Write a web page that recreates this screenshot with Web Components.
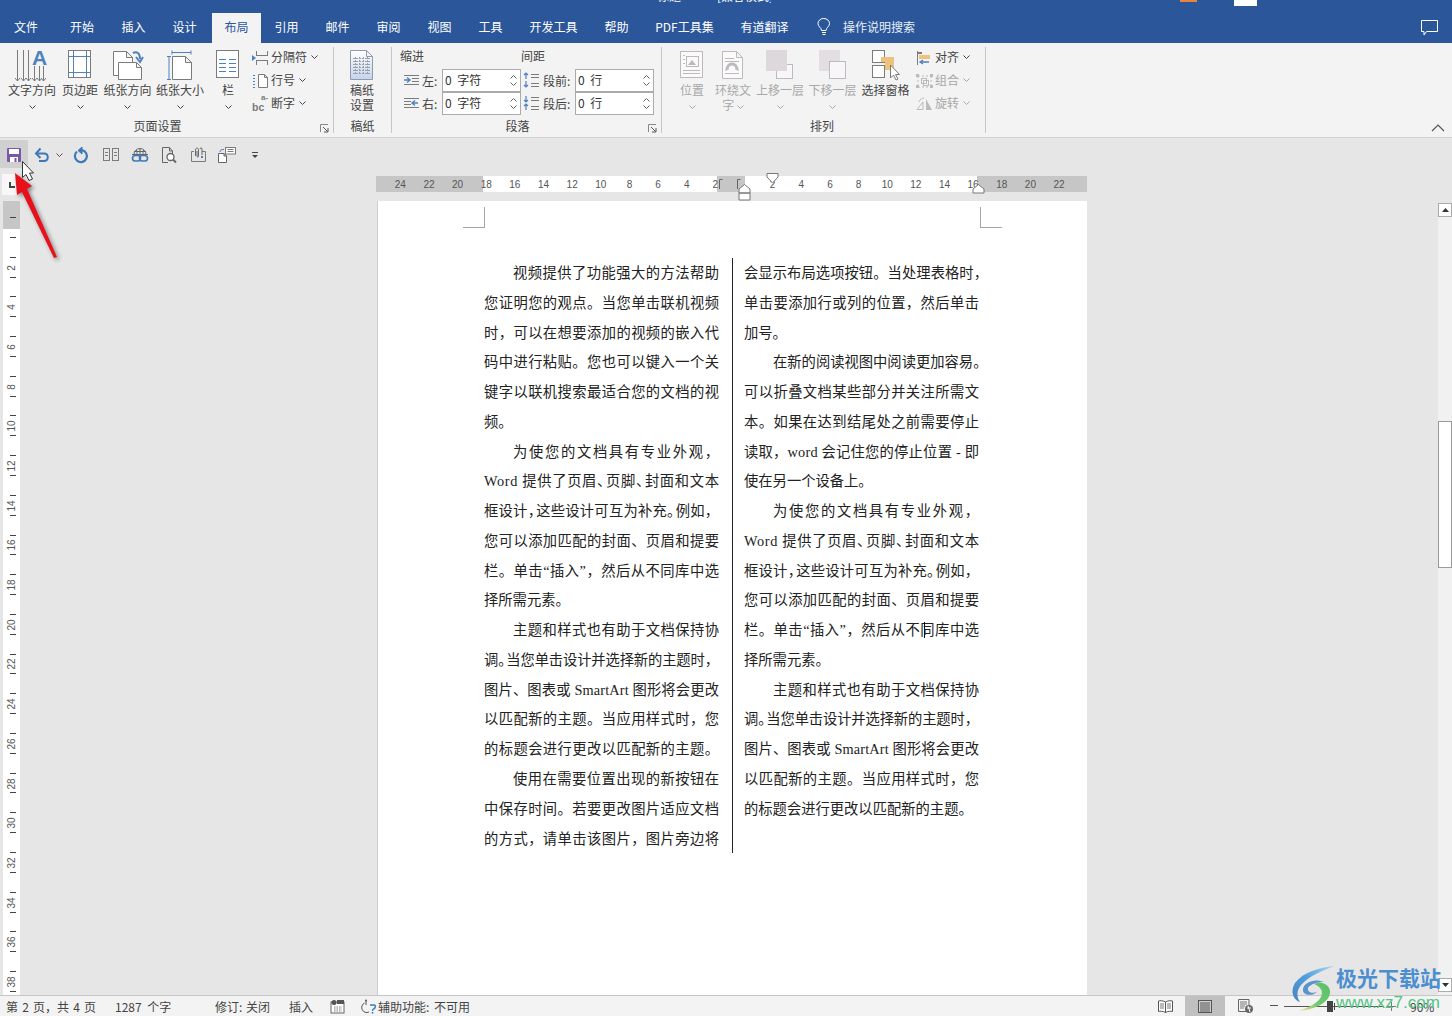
<!DOCTYPE html>
<html lang="zh-CN">
<head>
<meta charset="utf-8">
<title>Word</title>
<style>
  html, body { margin: 0; height: 100%; overflow: hidden; }
  body { font-family: "Noto Sans CJK SC", "Liberation Sans", sans-serif; font-size: 12px; color: #444; }
</style>
</head>
<body>
<word-app>
  <title-tabs></title-tabs>
  <ribbon-bar>
    <ribbon-group label="页面设置" width="334" pad="6" label-pad="18" launcher>
      <big-button icon="textdir" label="文字方向" width="52"></big-button>
      <big-button icon="margins" label="页边距" width="44"></big-button>
      <big-button icon="orient" label="纸张方向" width="51"></big-button>
      <big-button icon="size" label="纸张大小" width="54"></big-button>
      <big-button icon="cols" label="栏" width="42"></big-button>
      <small-stack>
        <small-button icon="breaks" label="分隔符" menu></small-button>
        <small-button icon="linenum" label="行号" menu></small-button>
        <small-button icon="hyph" label="断字" menu></small-button>
      </small-stack>
    </ribbon-group>
    <ribbon-group label="稿纸" width="58" pad="0" label-pad="0">
      <big-button icon="gridpage" label="稿纸" line2="设置" width="56" nomenu></big-button>
    </ribbon-group>
    <ribbon-group label="段落" width="270" pad="8" label-pad="18" launcher>
      <para-panel></para-panel>
    </ribbon-group>
    <ribbon-group label="排列" width="324" pad="10" label-pad="3">
      <big-button icon="position" label="位置" width="40" disabled></big-button>
      <big-button icon="wrap" label="环绕文" line2="字" width="42" disabled inline-menu></big-button>
      <big-button icon="forward" label="上移一层" width="52" disabled></big-button>
      <big-button icon="backward" label="下移一层" width="53" disabled></big-button>
      <big-button icon="pane" label="选择窗格" width="53" nomenu></big-button>
      <small-stack style="margin-left:4px">
        <small-button icon="align" label="对齐" menu></small-button>
        <small-button icon="group" label="组合" menu disabled></small-button>
        <small-button icon="rotate" label="旋转" menu disabled></small-button>
      </small-stack>
    </ribbon-group>
  </ribbon-bar>
  <quick-bar></quick-bar>
  <doc-workspace>
    <vertical-ruler slot="left"></vertical-ruler>
    <horizontal-ruler></horizontal-ruler>
    <doc-page></doc-page>
    <doc-scrollbar slot="right"></doc-scrollbar>
  </doc-workspace>
  <status-bar></status-bar>
  <click-marker></click-marker>
  <site-watermark></site-watermark>
</word-app>

<script>
const GR = '#7b7b7b';
const BL = '#4f81bd';
const DIS = '#bdb9bd';

function page(x, y, w, h, f) {
    return `M${x} ${y}H${x + w - f}L${x + w} ${y + f}V${y + h}H${x}ZM${x + w - f} ${y}V${y + f}H${x + w}`;
}

function downArrow(x, y1, y2) {
    return `<path d="M${x} ${y1}V${y2}" stroke="${GR}"/><path d="M${x - 2.5} ${y2 - 3}L${x} ${y2}L${x + 2.5} ${y2 - 3}" stroke="${GR}" fill="none"/>`;
}

function svg(w, h, body) {
    return `<svg width="${w}" height="${h}" viewBox="0 0 ${w} ${h}" fill="none" style="display:block;overflow:visible">${body}</svg>`;
}

const ICONS = {
    textdir: svg(36, 34, `
        ${downArrow(3.5, 2, 33)}${downArrow(9.5, 2, 33)}${downArrow(14.5, 2, 33)}
        ${downArrow(20.5, 18, 33)}${downArrow(25.5, 18, 33)}${downArrow(29.5, 18, 33)}
        <text x="18" y="17" font-family="Liberation Sans" font-weight="bold" font-size="21" fill="${BL}">A</text>`),
    margins: svg(24, 30, `
        <rect x=".5" y=".5" width="22" height="27" fill="#fff" stroke="${GR}"/>
        <path d="M5.5 1V27M18.5 1V27M1 6.5H22M1 22.5H22" stroke="${BL}"/>`),
    orient: svg(32, 32, `
        <path d="${page(1.5, 2.5, 19, 24, 6)}" fill="#fff" stroke="${GR}"/>
        <path d="${page(6.5, 13.5, 23, 17, 5)}" fill="#fff" stroke="${GR}"/>
        <path d="M21 4C25 2 28 4 28 10" stroke="${BL}" stroke-width="2"/>
        <path d="M24 8L28 13L31 8" stroke="${BL}" stroke-width="2"/>`),
    size: svg(28, 32, `
        <path d="M6 3.5H25M6 1.5V5.5M25 1.5V5.5M1 7.5H5M3 7.5V30.5M1 30.5H5" stroke="${BL}"/>
        <path d="${page(6.5, 7.5, 19, 23, 6)}" fill="#fff" stroke="${GR}"/>`),
    cols: svg(24, 30, `
        <rect x=".5" y=".5" width="22" height="27" fill="#fff" stroke="${GR}"/>
        <path d="M3 9.5H10M13 9.5H20M3 13.5H10M13 13.5H20M3 17.5H10M13 17.5H20M3 21.5H10M13 21.5H20" stroke="${BL}"/>`),
    gridpage: svg(26, 32, `
        <defs><linearGradient id="g" x1="0" y1="0" x2="0" y2="1"><stop offset="0" stop-color="#fff"/><stop offset="1" stop-color="#c5d3ea"/></linearGradient></defs>
        <path d="${page(1.5, 1.5, 22, 29, 6)}" fill="url(#g)" stroke="#8e9bb0"/>
        <path d="M4 9.5H21M4 12.5H21M4 15.5H21M4 18.5H21M4 21.5H21M4 24.5H21M6.5 8V26M10.5 8V26M14.5 8V26M18.5 8V26" stroke="#9a9fa8" stroke-dasharray="2 1"/>`),
    breaks: svg(16, 16, `
        <path d="M4.5 6V1M15.5 6V1M4.5 5.5H15.5M4.5 15V10M15.5 15V10M4.5 10.5H15.5" stroke="${GR}"/>
        <path d="M0 5L4 8L0 11Z" fill="${BL}"/>`),
    linenum: svg(16, 16, `
        <path d="${page(6.5, 1.5, 9, 13, 3)}" fill="#fff" stroke="${GR}"/>
        <path d="M1 2.5H4M1 5.5H4M1 8.5H4M1 11.5H4M1 14.5H4" stroke="${BL}" stroke-dasharray="2 1"/>`),
    hyph: svg(17, 16, `
        <text x="0" y="15" font-family="Liberation Sans" font-weight="bold" font-size="10.5" fill="${GR}">bc</text>
        <text x="9" y="4" font-family="Liberation Sans" font-weight="bold" font-size="8" fill="${GR}">a-</text>`),
    position: svg(26, 30, `
        <rect x="1.5" y="1.5" width="22" height="26" fill="#fbfafb" stroke="${DIS}"/>
        <rect x="7.5" y="6.5" width="12" height="10" stroke="${DIS}"/>
        <path d="M9 15L13 10L17 15Z" fill="${DIS}"/>
        <path d="M4 5.5H6M4 9.5H6M4 13.5H6M4 20.5H21M4 23.5H21" stroke="${DIS}"/>`),
    wrap: svg(24, 30, `
        <path d="${page(1.5, 1.5, 20, 27, 6)}" fill="#fbfafb" stroke="${DIS}"/>
        <path d="M4 8.5H13M4 11.5H18M4 23.5H18M4 20H6M16 20H18" stroke="${DIS}"/>
        <path d="M6 20C6 12 16 12 16 20" stroke="${DIS}" stroke-width="3"/>`),
    forward: svg(28, 30, `
        <rect x="10.5" y="14.5" width="16" height="14" fill="#f8f6f8" stroke="${DIS}"/>
        <rect x="0" y="0" width="21" height="21" fill="#dcd8dc"/>`),
    backward: svg(28, 30, `
        <rect x="0" y="0" width="21" height="21" fill="#e2dee2"/>
        <rect x="10.5" y="11.5" width="16" height="17" fill="#f8f6f8" stroke="${DIS}"/>`),
    pane: svg(30, 32, `
        <rect x="1.5" y="1.5" width="12" height="12" fill="#fff" stroke="${GR}"/>
        <rect x="1.5" y="16.5" width="12" height="12" fill="#fff" stroke="${GR}"/>
        <rect x="10" y="8" width="13" height="5" fill="#edc27c"/>
        <rect x="14" y="8" width="9" height="13" fill="#edc27c"/>
        <path d="M19.5 16V29L22.5 26L25 31L27 30L24.5 25.5H28.5Z" fill="#fff" stroke="${GR}"/>`),
    align: svg(16, 16, `
        <path d="M1.5 1V15" stroke="${GR}"/>
        <rect x="2" y="2" width="4" height="2" fill="${GR}"/>
        <rect x="3" y="5" width="11" height="4" fill="#edc27c"/>
        <path d="M13 12H5M7 10L4 12L7 14" stroke="${BL}" stroke-width="1.3"/>`),
    group: svg(17, 16, `
        <path d="M2 3H15M2 14H15M2 3V14M15 3V14" stroke="${DIS}" stroke-dasharray="2 2"/>
        <rect x="0" y="1" width="3" height="3" fill="${DIS}"/><rect x="14" y="1" width="3" height="3" fill="${DIS}"/>
        <rect x="0" y="12" width="3" height="3" fill="${DIS}"/><rect x="14" y="12" width="3" height="3" fill="${DIS}"/>
        <rect x="5.5" y="5.5" width="5" height="5" stroke="${DIS}"/><rect x="7.5" y="7.5" width="5" height="5" stroke="${DIS}"/>`),
    rotate: svg(17, 16, `
        <path d="M1 13.5L7 6V13.5Z" stroke="${DIS}"/>
        <path d="M10 3L16 14H10Z" fill="${DIS}"/>
        <path d="M3 6C4 3 6 2 8 2" stroke="${DIS}"/>`),
    save: svg(16, 16, `
        <rect x="1" y="1" width="14" height="14" rx="1" fill="#7b57ab"/>
        <rect x="3" y="2" width="10" height="5" fill="#fff"/>
        <rect x="4" y="10" width="8" height="5" fill="#fff"/>
        <rect x="8.5" y="11" width="2" height="4" fill="#7b57ab"/>`),
    undo: svg(16, 16, `
        <path d="M2.5 6.5H10C15 6.5 15 14 10 14H5" stroke="#3f78b8" stroke-width="2"/>
        <path d="M6.5 1.5L2 6.5L6.5 11" stroke="#3f78b8" stroke-width="2"/>`),
    redo: svg(16, 16, `
        <path d="M9 3.2A6 6 0 1 1 4 4.5" stroke="#3f78b8" stroke-width="2.2"/>
        <path d="M9 0V7L5 3.5Z" fill="#3f78b8" stroke="#3f78b8"/>`),
    book: svg(18, 14, `
        <rect x="1.5" y=".5" width="6" height="12" stroke="${GR}"/><rect x="10.5" y=".5" width="6" height="12" stroke="${GR}"/>
        <path d="M3 4.5H6M3 7.5H6M12 4.5H15M12 7.5H15" stroke="${GR}"/>`),
    link: svg(18, 16, `
        <path d="M3 7.5A6 6 0 0 1 15 7.5M1 7.5H17M9 1.5V7M5.5 3C6 5 6 6 6 7.5M12.5 3C12 5 12 6 12 7.5M3 4.5H15" stroke="#666"/>
        <rect x="1.5" y="8.5" width="8" height="5.5" rx="2.7" stroke="#3f78b8" stroke-width="1.6"/>
        <rect x="8.5" y="8.5" width="8" height="5.5" rx="2.7" stroke="#3f78b8" stroke-width="1.6"/>`),
    preview: svg(16, 17, `
        <path d="M11.5 7V4L8.5 .5H1.5V15.5H7M8.5 .5V4H11.5" stroke="#666"/>
        <circle cx="9.5" cy="10" r="3.5" fill="#fff" stroke="#666" stroke-width="1.3"/>
        <path d="M12 12.5L15 15.5" stroke="#666" stroke-width="2"/>`),
    attach: svg(17, 16, `
        <path d="M4 4.5H1.5V14.5H15.5V4.5H12" stroke="${GR}"/>
        <path d="M5.5 9V3C5.5 .5 8.5 .5 8.5 3V9C8.5 10.5 7 10.5 7 9V4M10 2C10 .5 12 .5 12 2V8" stroke="#666"/>
        <rect x="11" y="9" width="2" height="2" fill="${BL}"/>`),
    sendto: svg(18, 16, `
        <path d="${page(.5, 6.5, 8, 9, 2.5)}" fill="#fff" stroke="#666"/>
        <rect x="7.5" y=".5" width="10" height="6.5" fill="#fff" stroke="${GR}"/>
        <path d="M9.5 2.5H15.5M9.5 4.5H15.5" stroke="${GR}"/>
        <path d="M2 5C2 3 3 2.5 6 2.5" stroke="${BL}"/>`),
    qatmore: svg(8, 8, `<path d="M1 1.5H7" stroke="#444"/><path d="M1 4H7L4 7Z" fill="#444"/>`),
    bulb: svg(14, 18, `
        <path d="M4.5 12.5C4.5 9.5 1 9 1 5.5A5.7 5 0 0 1 12.5 5.5C12.5 9 9 9.5 9 12.5Z" stroke="#fff"/>
        <path d="M5 14.5H9M5.5 16.5H8.5" stroke="#fff"/>`),
    comment: svg(18, 16, `<path d="M.5 .5H16.5V11.5H5.5L3 15V11.5H.5Z" stroke="#fff"/>`),
    macro: svg(13, 13, `
        <rect x="0" y="2" width="13" height="11" fill="#fff" stroke="#666"/>
        <circle cx="3" cy="2.5" r="2.5" fill="#555"/><rect x="6" y="0" width="7" height="4" fill="#555"/>
        <path d="M3 7H11M3 9H11M3 11H11" stroke="#777" stroke-dasharray="1.5 1"/>`),
    access: svg(16, 15, `
        <path d="M5 1.5V6M3.5 4A5 5 0 1 0 8 13" stroke="#555"/>
        <circle cx="5" cy="1.5" r="1" fill="#555"/>
        <path d="M9 6H13C15 6 15 9 12.5 10C11.5 10.6 11.5 11 11.5 12" stroke="#3f78b8" stroke-width="1.4"/>
        <rect x="10.7" y="13" width="1.6" height="1.6" fill="#3f78b8"/>`),
    readmode: svg(15, 13, `
        <path d="M7.5 2C5 .5 2 .5 .5 1V11.5C2 11 5 11 7.5 12.5C10 11 13 11 14.5 11.5V1C13 .5 10 .5 7.5 2ZM7.5 2V12.5" fill="#fff" stroke="#555"/>
        <path d="M2 4H6M2 6H6M2 8H6M9 4H13M9 6H13M9 8H13" stroke="#777"/>`),
    printview: svg(14, 13, `
        <rect x=".5" y=".5" width="13" height="12" fill="#cfcfcf" stroke="#555"/>
        <path d="M2 3H12M2 5H12M2 7H12M2 9H12M2 11H12" stroke="#555"/>`),
    webview: svg(15, 14, `
        <path d="M9 12.5H.5V.5H11V6" stroke="#666"/>
        <path d="M2 3H9M2 5H9M2 7H7M2 9H6" stroke="#777"/>
        <circle cx="11" cy="10" r="4" fill="#666"/>
        <path d="M9 9H13M10 7L12 13" stroke="#fff"/>`),
    swirl: svg(46, 48, `
        <defs>
          <linearGradient id="s1" x1="1" y1="0" x2="0" y2="1"><stop offset="0" stop-color="#a9dcf2"/><stop offset=".5" stop-color="#4f9ddb"/><stop offset="1" stop-color="#4a83c3"/></linearGradient>
          <linearGradient id="s2" x1="1" y1="0" x2="0" y2="1"><stop offset="0" stop-color="#58c06b"/><stop offset=".6" stop-color="#74c96d"/><stop offset="1" stop-color="#f0e48e"/></linearGradient>
        </defs>
        <path d="M44 2C30 3 12 8 4 19C-1 27 2 36 9 38C5 32 6 26 10 21C18 12 32 6 44 2Z" fill="url(#s1)"/>
        <path d="M33 18C24 14 13 18 12 25C11 31 20 33 26 28C21 30 16 28 17 24C19 20 27 18 33 18Z" fill="#5a93cd"/>
        <path d="M23 20C30 17 38 20 39 27C40 36 28 45 8 47C22 42 31 36 31 29C31 25 28 22 23 20Z" fill="url(#s2)"/>`)
};

class WordApp extends HTMLElement {
    constructor() {
        super();
        this.attachShadow({ mode: 'open' });
        this.shadowRoot.innerHTML = `
            <style>
                :host { display: flex; flex-direction: column; position: relative; width: 1452px; height: 1016px; overflow: hidden; background: #e6e6e6; }
            </style>
            <slot></slot>
        `;
    }
}

class TitleTabs extends HTMLElement {
    connectedCallback() {
        const tabs = [
            ['文件', 56, 'first'], ['开始', 52], ['插入', 51], ['设计', 51, 'before-active'], ['布局', 49, 'active'], ['引用', 51], ['邮件', 51],
            ['审阅', 51], ['视图', 51], ['工具', 51], ['开发工具', 75], ['帮助', 51], ['PDF工具集', 85], ['有道翻译', 75]
        ];
        this.attachShadow({ mode: 'open' }).innerHTML = `
            <style>
                :host { display: block; flex: none; height: 43px; background: #2b579a; color: #fff; font-size: 12px; }
                .title { height: 13px; display: flex; }
                .clip { height: 3px; overflow: hidden; line-height: 12px; }
                .clip span { display: block; margin-top: -10px; white-space: nowrap; }
                .t1 { margin-left: 657px; width: 60px; }
                .t2 { width: 54px; }
                .dot { width: 17px; height: 2px; background: #e8853a; margin-left: 409px; }
                .box { width: 23px; height: 6px; background: #fff; margin-left: 37px; }
                .tabs { display: flex; height: 30px; align-items: stretch; }
                .tab { display: flex; align-items: center; justify-content: center; padding-bottom: 3px; box-sizing: border-box; }
                .tab.first { padding-right: 4px; }
                .tab.before-active { margin-right: 2px; }
                .tab.active { background: #f3f3f3; color: #2b579a; }
                .search { display: flex; align-items: center; margin-left: 15px; gap: 12px; color: #e8eef7; padding-bottom: 3px; }
                .comment { margin-left: auto; margin-right: 13px; align-self: center; margin-top: -1px; }
            </style>
            <div class="title">
                <div class="clip t1"><span>标题</span></div>
                <div class="clip t2"><span>[兼容模式]</span></div>
                <div class="dot"></div>
                <div class="box"></div>
            </div>
            <div class="tabs">
                ${tabs.map(([name, w, cls]) => `<div class="tab ${cls || ''}" style="width:${w}px">${name}</div>`).join('')}
                <div class="search">${ICONS.bulb}<span>操作说明搜索</span></div>
                <div class="comment">${ICONS.comment}</div>
            </div>
        `;
    }
}

class RibbonBar extends HTMLElement {
    constructor() {
        super();
        this.attachShadow({ mode: 'open' }).innerHTML = `
            <style>
                :host { display: flex; flex: none; position: relative; height: 95px; box-sizing: border-box; background: #f3f3f3; border-bottom: 1px solid #d2d2d2; color: #444; }
                .collapse { position: absolute; right: 7px; bottom: 5px; }
            </style>
            <slot></slot>
            <svg class="collapse" width="14" height="8" fill="none"><path d="M1 7L7 1L13 7" stroke="#555" stroke-width="1.2"/></svg>
        `;
    }
}

class RibbonGroup extends HTMLElement {
    connectedCallback() {
        const launcher = this.hasAttribute('launcher');
        this.attachShadow({ mode: 'open' }).innerHTML = `
            <style>
                :host { display: flex; flex-direction: column; flex: none; position: relative; box-sizing: border-box; width: ${this.getAttribute('width')}px; margin: 4px 0; border-right: 1px solid #c6c6c6; }
                .body { display: flex; flex: 1; padding-left: ${this.getAttribute('pad')}px; min-height: 0; }
                .label { height: 14px; line-height: 14px; text-align: center; margin-top: -1px; padding-right: ${this.getAttribute('label-pad')}px; }
                .launcher { position: absolute; right: 4px; bottom: 0; }
            </style>
            <div class="body"><slot></slot></div>
            <div class="label">${this.getAttribute('label')}</div>
            ${launcher ? `<svg class="launcher" width="9" height="9" fill="none"><path d="M.5 8V.5H8" stroke="#888"/><path d="M3 3L7.5 7.5M4 8H8V4" stroke="#555"/></svg>` : ''}
        `;
    }
}

const CHEVRON = `<svg width="7" height="5" fill="none" style="display:inline-block"><path d="M.5 .5L3.5 3.5L6.5 .5" stroke="currentColor"/></svg>`;

class BigButton extends HTMLElement {
    connectedCallback() {
        const line2 = this.getAttribute('line2');
        const inlineMenu = this.hasAttribute('inline-menu');
        const nomenu = this.hasAttribute('nomenu');
        let second = '';
        if (line2) second = `<div class="line">${line2}${inlineMenu ? ' ' + CHEVRON : ''}</div>`;
        else if (!nomenu) second = `<div class="line">${CHEVRON}</div>`;
        this.attachShadow({ mode: 'open' }).innerHTML = `
            <style>
                :host { display: flex; flex-direction: column; align-items: center; flex: none; width: ${this.getAttribute('width')}px; color: ${this.hasAttribute('disabled') ? '#a8a8a8' : '#444'}; }
                .icon { height: 35px; display: flex; justify-content: center; align-items: center; }
                .line { height: 15px; line-height: 15px; white-space: nowrap; font-size: 12px; }
            </style>
            <div class="icon">${ICONS[this.getAttribute('icon')]}</div>
            <div class="line">${this.getAttribute('label')}</div>
            ${second}
        `;
    }
}

class SmallStack extends HTMLElement {
    constructor() {
        super();
        this.attachShadow({ mode: 'open' }).innerHTML = `
            <style>:host { display: flex; flex-direction: column; margin-left: 3px; margin-top: -1px; }</style>
            <slot></slot>
        `;
    }
}

class SmallButton extends HTMLElement {
    connectedCallback() {
        this.attachShadow({ mode: 'open' }).innerHTML = `
            <style>
                :host { display: flex; align-items: center; gap: 2px; height: 23px; color: ${this.hasAttribute('disabled') ? '#a8a8a8' : '#444'}; }
                .icon { width: 17px; display: flex; }
                span { margin-top: -2px; }
                .chev { margin-left: 2px; display: flex; }
            </style>
            <div class="icon">${ICONS[this.getAttribute('icon')]}</div>
            <span>${this.getAttribute('label')}</span>
            <div class="chev">${CHEVRON}</div>
        `;
    }
}

class SpinField extends HTMLElement {
    connectedCallback() {
        this.attachShadow({ mode: 'open' }).innerHTML = `
            <style>
                :host { display: flex; align-items: center; height: 23px; width: ${this.getAttribute('width')}px; }
                .label { flex: 1; display: flex; align-items: center; margin-top: -1px; }
                .box { display: flex; align-items: center; justify-content: space-between; box-sizing: border-box; width: ${this.getAttribute('box')}px; height: 23px; background: #fff; border: 1px solid #ababab; padding: 0 3px 0 2px; color: #333; }
                .box span { word-spacing: 3px; margin-top: -2px; }
                .spin { display: flex; flex-direction: column; gap: 3px; color: #666; }
                .spin svg { display: block; }
            </style>
            <div class="label"><slot></slot></div>
            <div class="box">
                <span>${this.getAttribute('value')}</span>
                <div class="spin">
                    <svg width="7" height="4" fill="none"><path d="M.5 3.5L3.5 .5L6.5 3.5" stroke="currentColor"/></svg>
                    <svg width="7" height="4" fill="none"><path d="M.5 .5L3.5 3.5L6.5 .5" stroke="currentColor"/></svg>
                </div>
            </div>
        `;
    }
}

class ParaPanel extends HTMLElement {
    connectedCallback() {
        const left = svg(17, 12, `<path d="M1 1.5H16M9 4.5H16M9 7.5H16M1 10.5H16" stroke="${GR}"/><path d="M1 6H6M4 3.5L7 6L4 8.500" stroke="${BL}" stroke-width="1.4"/>`);
        const right = svg(17, 12, `<path d="M1 1.5H16M1 4.5H8M1 7.5H8M1 10.5H16" stroke="${GR}"/><path d="M15 6H10M12 3.5L9 6L12 8.500" stroke="${BL}" stroke-width="1.4"/>`);
        const before = svg(17, 16, `<path d="M3 1V7M1 3L3 1L5 3M3 9V15M1 13L3 15L5 13" stroke="${BL}" stroke-width="1.2"/><path d="M8 2.500H16M8 5.500H16M8 11.500H16M8 14.500H16" stroke="${GR}"/>`);
        const after = svg(17, 16, `<path d="M3 1V7M1 5L3 7L5 5M3 9V15M1 11L3 9L5 11" stroke="${BL}" stroke-width="1.2"/><path d="M8 2.500H16M8 5.500H16M8 11.500H16M8 14.500H16" stroke="${GR}"/>`);
        this.attachShadow({ mode: 'open' }).innerHTML = `
            <style>
                :host { display: grid; grid-template-columns: 121px 133px; grid-template-rows: 22px 23px 23px; }
                .head { padding-top: 1px; line-height: 15px; }
                .wrap { display: flex; align-items: center; gap: 2px; }
                .ic1 { margin-left: 3px; }
                .ic2 { margin-left: 2px; gap: 3px; }
            </style>
            <div class="head">缩进</div>
            <div class="head">间距</div>
            <spin-field width="121" box="79" value="0 字符"><div class="wrap ic1">${left}<span>左:</span></div></spin-field>
            <spin-field width="133" box="79" value="0 行"><div class="wrap ic2">${before}<span>段前:</span></div></spin-field>
            <spin-field width="121" box="79" value="0 字符"><div class="wrap ic1">${right}<span>右:</span></div></spin-field>
            <spin-field width="133" box="79" value="0 行"><div class="wrap ic2">${after}<span>段后:</span></div></spin-field>
        `;
    }
}

class QuickBar extends HTMLElement {
    connectedCallback() {
        const item = (name, w) => `<div class="item" style="width:${w}px">${ICONS[name]}</div>`;
        this.attachShadow({ mode: 'open' }).innerHTML = `
            <style>
                :host { display: flex; flex: none; height: 32px; padding-top: 2px; box-sizing: border-box; background: #e6e6e6; }
                .item { display: flex; align-items: center; justify-content: center; height: 28px; padding-top: 2px; box-sizing: border-box; flex: none; }
                .save { background: #d0d0d0; }
                .chev { color: #555; align-items: center; display: flex; width: 9px; margin-right: 8px; padding-top: 2px; height: 26px; }
            </style>
            <div class="item save" style="width:28px">${ICONS.save}</div>
            ${item('undo', 28)}
            <div class="chev">${CHEVRON}</div>
            ${item('redo', 16)}
            <div style="width:7px"></div>
            ${item('book', 30)}
            ${item('link', 28)}
            ${item('preview', 30)}
            ${item('attach', 28)}
            ${item('sendto', 30)}
            ${item('qatmore', 26)}
        `;
    }
}

class DocWorkspace extends HTMLElement {
    constructor() {
        super();
        this.attachShadow({ mode: 'open' }).innerHTML = `
            <style>
                :host { display: flex; flex: 1; min-height: 0; overflow: hidden; background: #e6e6e6; }
                .left { flex: none; width: 21px; display: flex; flex-direction: column; }
                .center { flex: 1; min-width: 0; display: flex; flex-direction: column; padding-top: 6px; }
                .right { flex: none; width: 14px; display: flex; }
            </style>
            <div class="left"><slot name="left"></slot></div>
            <div class="center"><slot></slot></div>
            <div class="right"><slot name="right"></slot></div>
        `;
    }
}

class VerticalRuler extends HTMLElement {
    connectedCallback() {
        let cells = '';
        for (let k = 0; k < 40; k++) {
            const num = k > 0 && k % 2 === 0 ? `<span>${k}</span>` : '';
            cells += `<div class="cell">${num}</div>`;
        }
        this.attachShadow({ mode: 'open' }).innerHTML = `
            <style>
                :host { display: flex; flex-direction: column; flex: 1; min-height: 0; padding: 4px 0 0 0; }
                .corner { height: 21px; width: 16px; margin-left: 2px; background: #f7f7f7; box-sizing: border-box; position: relative; }
                .corner::after { content: ""; position: absolute; left: 7px; top: 8px; width: 6px; height: 6px; border-left: 2px solid #444; border-bottom: 2px solid #444; box-sizing: border-box; }
                .track { margin: 6px 0 0 3px; width: 17px; flex: 1; min-height: 0; overflow: hidden; background: linear-gradient(#c6c6c6 0 28px, #fff 28px); padding-top: 16px; box-sizing: border-box; font-size: 10px; color: #555; font-family: "Liberation Sans", sans-serif; }
                .cell { height: 19.85px; position: relative; display: flex; align-items: center; justify-content: center; }
                .cell::before { content: ""; position: absolute; top: 0; left: 7px; width: 6px; height: 1px; background: #444; }
                .cell span { display: block; transform: rotate(-90deg); line-height: 10px; white-space: nowrap; margin-top: 2px; }
            </style>
            <div class="corner"></div>
            <div class="track">${cells}</div>
        `;
    }
}

class HorizontalRuler extends HTMLElement {
    connectedCallback() {
        const nums = [24, 22, 20, 18, 16, 14, 12, 10, 8, 6, 4, 2, '', 2, 4, 6, 8, 10, 12, 14, 16, 18, 20, 22];
        this.attachShadow({ mode: 'open' }).innerHTML = `
            <style>
                :host { display: block; position: relative; flex: none; margin-left: 355px; width: 711px; height: 16px; padding-left: 10px; box-sizing: border-box; font: 10px "Liberation Sans", sans-serif; color: #555;
                    background: linear-gradient(to right, #c6c6c6 0 107px, #fff 107px 341px, #c6c6c6 341px 369px, #fff 369px 601px, #c6c6c6 601px); }
                .nums { display: flex; height: 16px; }
                .nums span { flex: none; width: 28.65px; text-align: center; line-height: 17px; }
                .mark { position: absolute; }
            </style>
            <div class="nums">${nums.map(n => `<span>${n}</span>`).join('')}</div>
            <svg class="mark" style="left:343px;top:3px" width="4" height="11" fill="none"><path d="M3.5 .5H.5V10" stroke="#666"/></svg>
            <svg class="mark" style="left:361px;top:3px" width="4" height="11" fill="none"><path d="M3.5 .5H.5V10" stroke="#666"/></svg>
            <svg class="mark" style="left:390px;top:-3px" width="13" height="11" fill="#fff"><path d="M1 .5H12V4L6.500 10L1 4Z" stroke="#777"/></svg>
            <svg class="mark" style="left:362px;top:8px" width="13" height="17" fill="#fff"><path d="M1 9V5L6.500 .5L12 5V9ZM1 9H12V16H1Z" stroke="#777"/></svg>
            <svg class="mark" style="left:596px;top:8px" width="13" height="10" fill="#fff"><path d="M1 9V5L6.500 .5L12 5V9Z" stroke="#777"/></svg>
        `;
    }
}

const COL1 = [
    '>视频提供了功能强大的方法帮助', '您证明您的观点。当您单击联机视频', '时，可以在想要添加的视频的嵌入代', '码中进行粘贴。您也可以键入一个关',
    '键字以联机搜索最适合您的文档的视', '频。$', '>为使您的文档具有专业外观，', 'Word 提供了页眉、页脚、封面和文本',
    '框设计，这些设计可互为补充。例如，', '您可以添加匹配的封面、页眉和提要', '栏。单击“插入”，然后从不同库中选', '择所需元素。$',
    '>主题和样式也有助于文档保持协', '调。当您单击设计并选择新的主题时，', '图片、图表或 SmartArt 图形将会更改', '以匹配新的主题。当应用样式时，您',
    '的标题会进行更改以匹配新的主题。', '>使用在需要位置出现的新按钮在', '中保存时间。若要更改图片适应文档', '的方式，请单击该图片，图片旁边将'
];
const COL2 = [
    '~会显示布局选项按钮。当处理表格时，', '单击要添加行或列的位置，然后单击', '加号。$', '>在新的阅读视图中阅读更加容易。$',
    '可以折叠文档某些部分并关注所需文', '本。如果在达到结尾处之前需要停止', '读取，word 会记住您的停止位置 - 即', '使在另一个设备上。$',
    '>为使您的文档具有专业外观，', 'Word 提供了页眉、页脚、封面和文本', '框设计，这些设计可互为补充。例如，', '您可以添加匹配的封面、页眉和提要',
    '栏。单击“插入”，然后从不同库中选', '择所需元素。$', '>主题和样式也有助于文档保持协', '调。当您单击设计并选择新的主题时，',
    '图片、图表或 SmartArt 图形将会更改', '以匹配新的主题。当应用样式时，您', '的标题会进行更改以匹配新的主题。$'
];

class DocPage extends HTMLElement {
    connectedCallback() {
        const line = raw => {
            const indent = raw.startsWith('>');
            const hang = raw.startsWith('~');
            const free = raw.endsWith('$');
            const text = raw.replace(/^[>~]/, '').replace(/\$$/, '');
            return `<div class="line ${indent ? 'indent' : ''} ${hang ? 'hang' : ''}" ${free ? '' : 'data-fit'}><span>${text}</span></div>`;
        };
        this.attachShadow({ mode: 'open' }).innerHTML = `
            <style>
                :host { display: block; position: relative; flex: 1; min-height: 0; margin-left: 356px; width: 710px; box-sizing: border-box; margin-top: 9px; background: #fff; border-left: 1px solid #cfcfcf; font-family: "Liberation Serif", "Noto Sans CJK SC", serif; font-size: 14.3px; color: #222; }
                .marks { display: flex; justify-content: space-between; margin: 6px 85px 0; }
                .marks div { width: 21px; height: 20px; border-bottom: 1px solid #a6a6a6; }
                .marks .a { border-right: 1px solid #a6a6a6; }
                .marks .b { border-left: 1px solid #a6a6a6; }
                .cols { display: flex; align-items: flex-start; margin: 30px 0 0 106px; }
                .col { width: 235px; flex: none; }
                .col.second { margin-left: 13px; border-left: 1px solid #222; padding-left: 11px; width: 236px; align-self: stretch; }
                .line { height: 29.77px; line-height: 29.77px; white-space: nowrap; }
                .line.indent { padding-left: 29px; }
                .line span { position: relative; top: 1px; letter-spacing: var(--ls, 0px); }
                .line i { font-style: normal; letter-spacing: calc(var(--ls, 0px) - .42em); }
                .caret { position: absolute; left: 546px; top: 421px; width: 1px; height: 16px; background: #111; }
            </style>
            <div class="marks"><div class="a"></div><div class="b"></div></div>
            <div class="cols">
                <div class="col">${COL1.map(line).join('')}</div>
                <div class="col second">${COL2.map(line).join('')}</div>
            </div>
            <div class="caret"></div>
        `;
        this.shadowRoot.querySelectorAll('.line[data-fit]').forEach(el => this.fit(el));
    }

    // spread each full line to the column width, tightening inner punctuation when it overflows
    fit(el) {
        const span = el.firstElementChild;
        const hang = el.classList.contains('hang');
        const target = hang ? 244 : el.classList.contains('indent') ? 206 : 235;
        const text = span.textContent;
        if (!hang && span.getBoundingClientRect().width > target) {
            span.innerHTML = text.replace(/[，。、“”](?!$)/g, '<i>$&</i>');
        }
        const natural = span.getBoundingClientRect().width;
        span.style.setProperty('--ls', `${(target - natural) / (text.length - 1)}px`);
    }
}

class DocScrollbar extends HTMLElement {
    constructor() {
        super();
        this.attachShadow({ mode: 'open' }).innerHTML = `
            <style>
                :host { display: flex; flex-direction: column; flex: 1; margin-top: 33px; background: #f1f1f1; }
                .btn { height: 14px; box-sizing: border-box; background: #fff; border: 1px solid #ababab; display: flex; align-items: center; justify-content: center; flex: none; }
                .gap1 { height: 204px; flex: none; }
                .thumb { height: 147px; flex: none; box-sizing: border-box; background: #fff; border: 1px solid #9a9a9a; }
                .gap2 { flex: 1; }
            </style>
            <div class="btn"><svg width="7" height="4"><path d="M0 4L3.500 0L7 4Z" fill="#333"/></svg></div>
            <div class="gap1"></div>
            <div class="thumb"></div>
            <div class="gap2"></div>
            <div class="btn"><svg width="7" height="4"><path d="M0 0L3.500 4L7 0Z" fill="#333"/></svg></div>
            <div style="height:3px;flex:none"></div>
        `;
    }
}

class StatusBar extends HTMLElement {
    connectedCallback() {
        this.attachShadow({ mode: 'open' }).innerHTML = `
            <style>
                :host { display: flex; align-items: center; flex: none; height: 21px; box-sizing: border-box; border-top: 1px solid #c6c6c6; background: #f3f3f3; color: #444; font-size: 12px; padding-left: 6px; white-space: nowrap; }
                .r { margin-left: auto; display: flex; align-items: center; height: 100%; }
                .view { display: flex; align-items: center; justify-content: center; width: 40px; height: 100%; }
                .view.on { background: #c0c0c0; }
                .zoom { position: relative; width: 100px; height: 1px; background: #555; margin: 0 3px 0 6px; }
                .zoom .thumb { position: absolute; left: 43px; top: -5px; width: 6px; height: 11px; background: #444; }
                .zoom .tick { position: absolute; left: 50px; top: -3px; width: 1px; height: 7px; background: #444; }
            </style>
            <span style="width:109px;word-spacing:1.5px">第 2 页，共 4 页</span>
            <span style="width:100px;word-spacing:3px">1287 个字</span>
            <span style="width:74px;word-spacing:1px">修订: 关闭</span>
            <span style="width:42px">插入</span>
            <span style="width:30px;display:flex">${ICONS.macro}</span>
            <span style="display:flex;align-items:center;gap:1px;word-spacing:2px">${ICONS.access}辅助功能: 不可用</span>
            <div class="r">
                <div class="view">${ICONS.readmode}</div>
                <div class="view on">${ICONS.printview}</div>
                <div class="view">${ICONS.webview}</div>
                <svg width="8" height="2" style="margin-left:5px"><path d="M0 .5H8" stroke="#555"/></svg>
                <div class="zoom"><div class="thumb"></div><div class="tick"></div></div>
                <svg width="9" height="9" fill="none"><path d="M0 4.500H9M4.500 0V9" stroke="#777"/></svg>
                <span style="width:56px;padding-left:14px;box-sizing:border-box">90%</span>
            </div>
        `;
    }
}

class ClickMarker extends HTMLElement {
    constructor() {
        super();
        this.attachShadow({ mode: 'open' }).innerHTML = `
            <style>
                :host { position: absolute; left: 0; top: 150px; width: 80px; height: 120px; pointer-events: none; }
                svg { display: block; overflow: visible; }
            </style>
            <svg width="80" height="120" viewBox="0 0 80 120" fill="none">
                <path d="M22.500 11.500V27.500L26 24.500L29 30.500L32.500 29L29.500 23H33.500Z" fill="#fff" stroke="#333"/>
                <g style="filter:drop-shadow(2px 2px 2px rgba(0,0,0,.45))">
                    <path d="M57 107L27 39L32 36L15 23L17 45L22 42L54 108Z" fill="#e8101a"/>
                </g>
            </svg>
        `;
    }
}

class SiteWatermark extends HTMLElement {
    connectedCallback() {
        this.attachShadow({ mode: 'open' }).innerHTML = `
            <style>
                :host { position: absolute; left: 1291px; top: 964px; display: flex; pointer-events: none; }
                .txt { display: flex; flex-direction: column; margin-left: -1px; }
                .cn { font: bold 21px/27px "Noto Sans CJK SC", sans-serif; color: #4b8fd0; white-space: nowrap; }
                .en { font: 17px/23px "Liberation Sans", sans-serif; color: #55c486; white-space: nowrap; }
            </style>
            ${ICONS.swirl}
            <div class="txt"><div class="cn">极光下载站</div><div class="en">www.xz7.com</div></div>
        `;
    }
}

customElements.define('word-app', WordApp);
customElements.define('title-tabs', TitleTabs);
customElements.define('ribbon-bar', RibbonBar);
customElements.define('ribbon-group', RibbonGroup);
customElements.define('big-button', BigButton);
customElements.define('small-stack', SmallStack);
customElements.define('small-button', SmallButton);
customElements.define('spin-field', SpinField);
customElements.define('para-panel', ParaPanel);
customElements.define('quick-bar', QuickBar);
customElements.define('doc-workspace', DocWorkspace);
customElements.define('vertical-ruler', VerticalRuler);
customElements.define('horizontal-ruler', HorizontalRuler);
customElements.define('doc-page', DocPage);
customElements.define('doc-scrollbar', DocScrollbar);
customElements.define('status-bar', StatusBar);
customElements.define('click-marker', ClickMarker);
customElements.define('site-watermark', SiteWatermark);
</script>
</body>
</html>
